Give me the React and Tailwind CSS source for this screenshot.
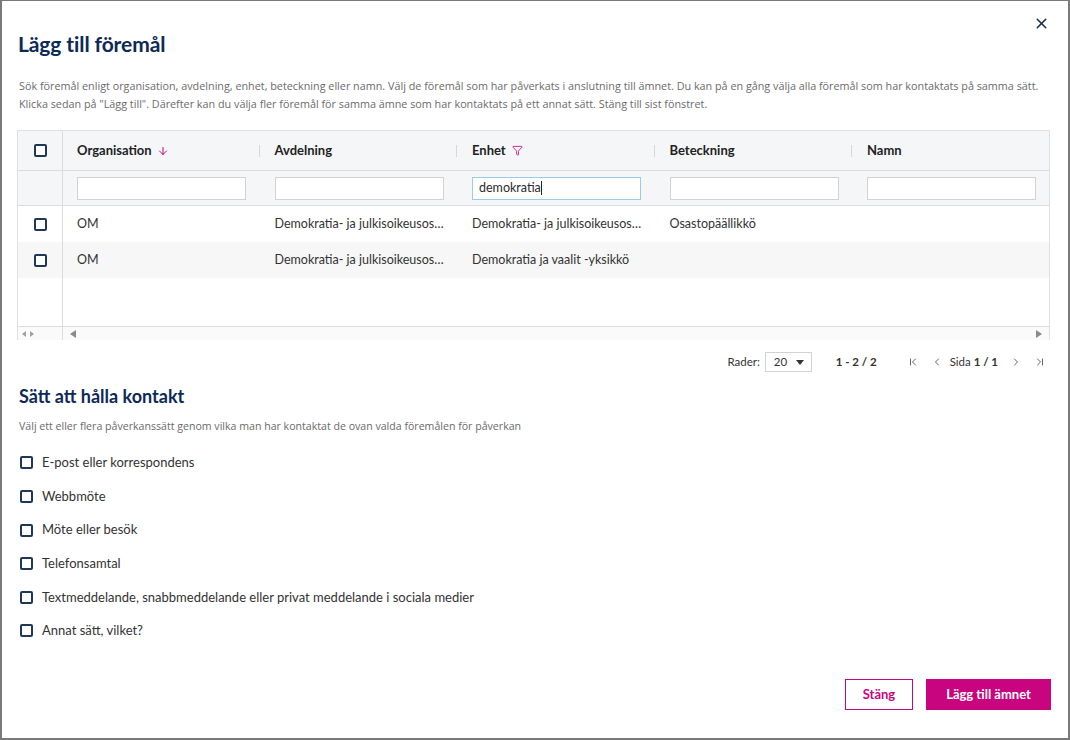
import { X, ArrowDown, Filter, ChevronLeft, ChevronRight, ChevronFirst, ChevronLast } from 'lucide-react'

const columns = ['Organisation', 'Avdelning', 'Enhet', 'Beteckning', 'Namn']

const rows = [
  { org: 'OM', avd: 'Demokratia- ja julkisoikeusos…', enhet: 'Demokratia- ja julkisoikeusos…', bet: 'Osastopäällikkö', namn: '' },
  { org: 'OM', avd: 'Demokratia- ja julkisoikeusos…', enhet: 'Demokratia ja vaalit -yksikkö', bet: '', namn: '' },
]

const contactWays = [
  'E-post eller korrespondens',
  'Webbmöte',
  'Möte eller besök',
  'Telefonsamtal',
  'Textmeddelande, snabbmeddelande eller privat meddelande i sociala medier',
  'Annat sätt, vilket?',
]

const Box = () => (
  <span className="block w-[13px] h-[13px] border-2 border-[#1f3858] rounded-[2px] bg-white" />
)

export default function App() {
  return (
    <div className="w-[1070px] h-[740px] bg-white border-x-2 border-b-2 border-t border-[#7a7a7a] relative overflow-hidden font-['Lato','Open_Sans',sans-serif] text-[#2b2b2b]">
      <button className="absolute top-[14px] right-[18px] text-[#1b2d4f]">
        <X className="w-[17px] h-[17px]" strokeWidth={2.2} />
      </button>

      <div className="px-[15px]">
        <h1 className="pt-[29px] pl-[1px] text-[21px] font-bold text-[#0d2a56] leading-7 tracking-[-0.1px]">Lägg till föremål</h1>
        <p className="mt-[19px] text-[10.8px] leading-[18px] text-[#6b6b6b] font-['Open_Sans',sans-serif] pl-[2px] whitespace-nowrap">
          Sök föremål enligt organisation, avdelning, enhet, beteckning eller namn. Välj de föremål som har påverkats i anslutning till ämnet. Du kan på en gång välja alla föremål som har kontaktats på samma sätt.
          <br />
          Klicka sedan på "Lägg till". Därefter kan du välja fler föremål för samma ämne som har kontaktats på ett annat sätt. Stäng till sist fönstret.
        </p>

        {/* table */}
        <div className="mt-[17px] w-[1033px] border border-b-0 border-[#e0e0e0] overflow-hidden">
          <div className="flex h-[40px] bg-[#f5f6f8] border-b border-[#dcdcdc]">
            <div className="w-[45px] shrink-0 flex items-center justify-center border-r border-[#dcdcdc]">
              <Box />
            </div>
            {columns.map((c, i) => (
              <div key={c} className="w-[197.5px] shrink-0 flex items-center pl-[14px] relative">
                <span className="text-[13px] font-bold text-[#222]">{c}</span>
                {i === 0 && <ArrowDown className="w-[12px] h-[12px] ml-[5px] text-[#c8057f]" strokeWidth={2} />}
                {i === 2 && <Filter className="w-[11px] h-[11px] ml-[6px] text-[#c8057f]" strokeWidth={1.8} />}
                <span className="absolute right-[1px] top-[14px] w-[1px] h-[12px] bg-[#d8d8d8]" />
              </div>
            ))}
          </div>
          <div className="flex h-[35px] bg-[#f5f6f8] border-b border-[#dcdcdc]">
            <div className="w-[45px] shrink-0 border-r border-[#dcdcdc]" />
            {columns.map((c, i) => (
              <div key={c} className="w-[197.5px] shrink-0 flex items-center pl-[14px]">
                <div className={`w-[169px] h-[23px] bg-white border text-[12.5px] pl-[6px] flex items-center ${i === 2 ? 'border-[#9ccbe8]' : 'border-[#d2d2d2]'}`}>
                  {i === 2 && (
                    <>
                      demokratia<span className="inline-block w-[1px] h-[14px] bg-[#222]" />
                    </>
                  )}
                </div>
              </div>
            ))}
          </div>
          {rows.map((r, idx) => (
            <div key={idx} className={`flex h-[36px] text-[12.5px] text-[#333] ${idx === 1 ? 'bg-[#f7f7f7]' : 'bg-white'}`}>
              <div className="w-[45px] shrink-0 flex items-center justify-center border-r border-[#dcdcdc]">
                <Box />
              </div>
              {[r.org, r.avd, r.enhet, r.bet, r.namn].map((v, i) => (
                <div key={i} className="w-[197.5px] shrink-0 flex items-center pl-[14px] whitespace-nowrap">{v}</div>
              ))}
            </div>
          ))}
          <div className="flex h-[48px]">
            <div className="w-[45px] shrink-0 border-r border-[#dcdcdc]" />
            <div className="flex-1" />
          </div>
          <div className="flex h-[14px] border-t border-[#dcdcdc] bg-[#fafafa]">
            <div className="w-[45px] shrink-0 border-r border-[#dcdcdc] flex items-center pl-[4px] gap-[4px] text-[#999]">
              <span className="w-0 h-0 border-y-[3px] border-y-transparent border-r-[4px] border-r-[#a0a0a0]" />
              <span className="w-0 h-0 border-y-[3px] border-y-transparent border-l-[4px] border-l-[#a0a0a0]" />
            </div>
            <div className="flex-1 flex items-center justify-between px-[7px]">
              <span className="w-0 h-0 border-y-[4px] border-y-transparent border-r-[6px] border-r-[#8a8a8a]" />
              <span className="w-0 h-0 border-y-[4px] border-y-transparent border-l-[6px] border-l-[#8a8a8a]" />
            </div>
          </div>
        </div>

        {/* pagination */}
        <div className="flex items-center justify-end w-[1034px] h-[22px] mt-[11px] pr-[5px] text-[11.5px] text-[#333]">
          <span>Rader:</span>
          <div className="ml-[5px] w-[47px] h-[20px] border border-[#d2d2d2] flex items-center pl-[8px] gap-[9px]">
            <span>20</span>
            <span className="w-0 h-0 border-x-[4px] border-x-transparent border-t-[5px] border-t-[#333]" />
          </div>
          <span className="ml-[24px] font-bold">1 - 2 / 2</span>
          <ChevronFirst className="ml-[30px] w-[12px] h-[12px]" strokeWidth={1.5} />
          <ChevronLeft className="ml-[12px] w-[12px] h-[12px]" strokeWidth={1.5} />
          <span className="ml-[7px]">Sida <span className="font-bold">1 / 1</span></span>
          <ChevronRight className="ml-[12px] w-[12px] h-[12px]" strokeWidth={1.5} />
          <ChevronLast className="ml-[12px] w-[12px] h-[12px]" strokeWidth={1.5} />
        </div>

        <h2 className="mt-[11px] text-[18px] font-bold text-[#0d2a56] leading-6 pl-[2px]">Sätt att hålla kontakt</h2>
        <p className="mt-[11px] text-[10.6px] text-[#6b6b6b] font-['Open_Sans',sans-serif] pl-[2px]">
          Välj ett eller flera påverkanssätt genom vilka man har kontaktat de ovan valda föremålen för påverkan
        </p>

        <div className="mt-[19px] pl-[3px] flex flex-col gap-[15.6px]">
          {contactWays.map((w) => (
            <label key={w} className="flex items-center gap-[9px] h-[18px] text-[13px] text-[#333]">
              <Box />
              <span>{w}</span>
            </label>
          ))}
        </div>

        <div className="absolute bottom-[28px] right-[17px] flex gap-[13px]">
          <button className="w-[68px] h-[31px] border border-[#c8057f] text-[#c8057f] text-[13px] font-bold">Stäng</button>
          <button className="w-[125px] h-[31px] bg-[#c8057f] text-white text-[13px] font-bold">Lägg till ämnet</button>
        </div>
      </div>
    </div>
  )
}
